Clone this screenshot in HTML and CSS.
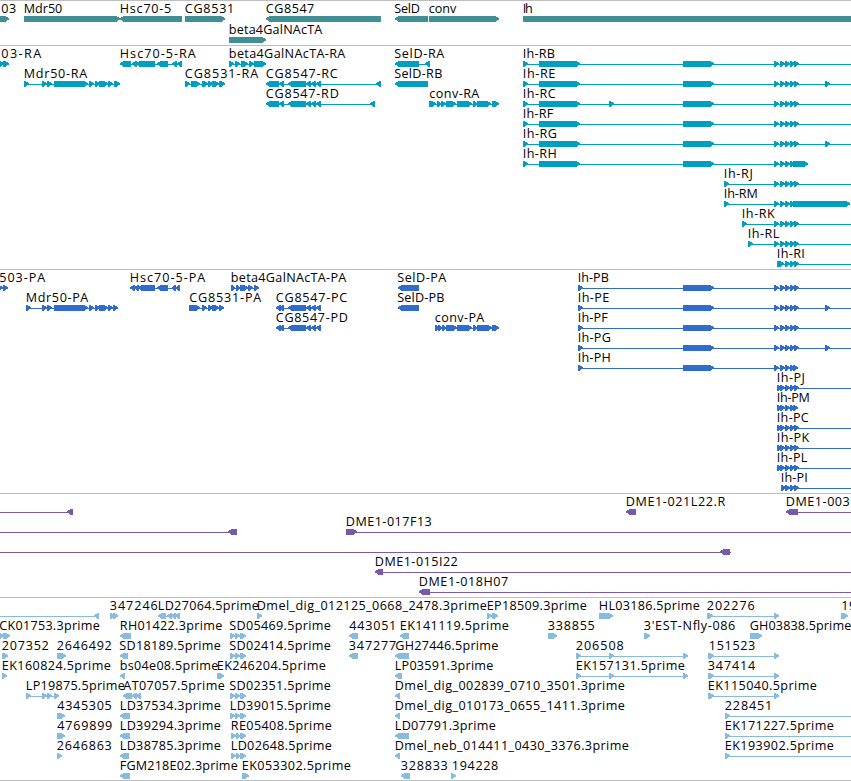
FILE: index.html
```
<!DOCTYPE html>
<html lang="en">
<head>
  <meta charset="UTF-8">
  <meta name="viewport" content="width=device-width, initial-scale=1.0">
  <title>Genome Annotation Viewer</title>
  <link rel="stylesheet" href="styles.css">
</head>
<body>
  <main class="viewer">
    <section class="track"><svg id="genes" class="lanes genes"></svg></section>
    <section class="track"><svg id="transcripts" class="lanes transcripts"></svg></section>
    <section class="track"><svg id="proteins" class="lanes proteins"></svg></section>
    <section class="track"><svg id="clones" class="lanes clones"></svg></section>
    <section class="track"><svg id="ests" class="lanes ests"></svg></section>
  </main>
  <script src="tracks.js"></script>
</body>
</html>
```
FILE: styles.css
```
body {
  margin: 0;
  background: #fff;
  overflow: hidden;
}
.viewer {
  display: flex;
  flex-direction: column;
  border-bottom: 1px solid #bebebe;
}
.track {
  border-top: 1px solid #bebebe;
}
.lanes {
  display: block;
  width: 100%;
}
.genes {
  height: 44px;
  color: #3f8f94;
}
.transcripts {
  height: 223px;
  color: #009fc0;
}
.proteins {
  height: 223px;
  color: #306ccc;
}
.clones {
  height: 103px;
  color: #785aac;
}
.ests {
  height: 182px;
  color: #88bbdd;
}
.label {
  font-family: "Open Sans", "Noto Sans", sans-serif;
  font-size: 12.6px;
  fill: #000;
}
.span, .box {
  fill: currentColor;
  shape-rendering: crispEdges;
}
```
FILE: tracks.js
```
const SVG = 'http://www.w3.org/2000/svg';
const EDGE = 860;

// Exons shared by several features
const ihTail = [[774, 779], [780, 785], [785, 790], [790, 795], [794, 799]];
const ihShort = [[785, 790], [790, 795], [794, 799]];
const ihBig = [[523, 528], [539, 580], [683, 714]];
const ihProt = [[578, 583], [683, 714]];
const ihStart = [[777, 781], [780, 785]];
const ihEnd = [[785, 790], [790, 795], [793, 798]];
const mdr = [[42, 47], [47, 52], [54, 88], [89, 94], [95, 100], [99, 108], [108, 113]];
const cgMid = [[288, 306], [306, 311], [311, 316], [316, 321]];
const sd = [[230, 235], [235, 240], [240, 246]];
const re = [[231, 236], [236, 240], [240, 246]];
const est3 = [[576, 581], [609, 614], [683, 688]];
const est2 = [[708, 714], [774, 779]];

// Each lane is a list of: name, [label start, label end], strand, boxes, [line start, line end]
const tracks = {
  genes: {
    pitch: 21,
    lanes: [
      [
        ['03', [2, 16], '>', [[-10, 9]]],
        ['Mdr50', [24.5, 62], '>', [[24, 120]]],
        ['Hsc70-5', [120.5, 171], '<', [[120, 182]]],
        ['CG8531', [185.5, 234], '>', [[185, 225]]],
        ['CG8547', [266.5, 314], '<', [[266, 381]]],
        ['SelD', [395, 419.5], '<', [[395, 428]]],
        ['conv', [429.5, 456], '>', [[429, 499]]],
        ['Ih', [523.5, 532.5], '>', [[523, EDGE]]]
      ],
      [
        ['beta4GalNAcTA', [229.5, 322], '>', [[229, 266]]]
      ]
    ]
  },
  transcripts: {
    pitch: 20,
    lanes: [
      [
        ['03-RA', [2, 41], '>', [[-2, 4], [3, 9]]],
        ['Hsc70-5-RA', [120.5, 195.5], '<', [[120, 131], [132, 137], [136, 155], [157, 168], [172, 177], [177, 182]]],
        ['beta4GalNAcTA-RA', [229.5, 345], '>', [[229, 234], [235, 240], [241, 248], [249, 254], [254, 266]]],
        ['SelD-RA', [395, 444], '<', [[395, 419], [425, 430]]],
        ['Ih-RB', [523.5, 554.5], '>', [...ihBig, ...ihTail], [523, EDGE]]
      ],
      [
        ['Mdr50-RA', [24.5, 87], '>', [[24, 29], ...mdr, [114, 120]]],
        ['CG8531-RA', [185.5, 258], '>', [[185, 190], [191, 200], [202, 208], [208, 213], [212, 219], [219, 225]]],
        ['CG8547-RC', [266.5, 337.5], '<', [[266, 279], [279, 284], ...cgMid, [376, 381]]],
        ['SelD-RB', [395, 442], '<', [[395, 428]]],
        ['Ih-RE', [523.5, 555], '>', [...ihBig, ...ihTail, [825, 830]], [523, EDGE]]
      ],
      [
        ['CG8547-RD', [266.5, 338.5], '<', [[266, 279], [279, 284], ...cgMid, [370, 375]]],
        ['conv-RA', [430, 479], '>', [[429, 436], [437, 441], [441, 446], [446, 456], [457, 472], [473, 477], [477, 491], [492, 499]]],
        ['Ih-RC', [523.5, 555.5], '>', [...ihBig, [609, 614], ...ihTail], [523, EDGE]]
      ],
      [['Ih-RF', [523.5, 553], '>', [...ihBig, ...ihTail], [523, EDGE]]],
      [['Ih-RG', [523.5, 556.5], '>', [...ihBig, ...ihTail, [825, 830]], [523, EDGE]]],
      [['Ih-RH', [523.5, 556.5], '>', [...ihBig, ...ihTail, [793, 808]]]],
      [['Ih-RJ', [724.5, 752.5], '>', [[724, 729], ...ihTail], [724, EDGE]]],
      [['Ih-RM', [724.5, 757.5], '>', [[724, 729], ...ihTail, [793, 850]]]],
      [['Ih-RK', [742.5, 774.5], '>', [[742, 747], ...ihTail], [742, EDGE]]],
      [['Ih-RL', [748.5, 779], '>', [[748, 753], ...ihTail], [748, EDGE]]],
      [['Ih-RI', [777.5, 804.5], '>', [[777, 784], ...ihShort], [777, EDGE]]]
    ]
  },
  proteins: {
    pitch: 20,
    lanes: [
      [
        ['503-PA', [0, 45], '>', [[-2, 3], [3, 8]]],
        ['Hsc70-5-PA', [130.5, 205], '<', [[130, 135], [134, 139], [138, 155], [157, 168], [172, 176], [176, 180]]],
        ['beta4GalNAcTA-PA', [231.5, 346], '>', [[231, 235], [236, 240], [240, 248], [248, 253], [254, 259]]],
        ['SelD-PA', [398, 446], '<', [[398, 419]]],
        ['Ih-PB', [578.5, 608.5], '>', [...ihProt, ...ihTail], [578, EDGE]]
      ],
      [
        ['Mdr50-PA', [26.5, 88], '>', [[26, 31], ...mdr, [113, 118]]],
        ['CG8531-PA', [190, 261], '>', [[189, 200], [202, 207], [208, 213], [212, 219], [219, 224]]],
        ['CG8547-PC', [276.5, 347], '<', [[276, 281], [280, 284], ...cgMid]],
        ['SelD-PB', [398, 444], '<', [[398, 419]]],
        ['Ih-PE', [578.5, 609], '>', [...ihProt, ...ihTail, [825, 830]], [578, EDGE]]
      ],
      [
        ['CG8547-PD', [276.5, 347.5], '<', [[276, 281], [280, 284], ...cgMid]],
        ['conv-PA', [435.5, 484], '>', [[435, 439], [438, 442], [442, 446], [446, 457], [457, 472], [473, 477], [477, 492], [492, 499]]],
        ['Ih-PF', [578.5, 607.5], '>', [...ihProt, ...ihTail], [578, EDGE]]
      ],
      [['Ih-PG', [578.5, 610.5], '>', [...ihProt, ...ihTail, [825, 830]], [578, EDGE]]],
      [['Ih-PH', [578.5, 610.5], '>', [...ihProt, [774, 779], [780, 785], ...ihEnd]]],
      [['Ih-PJ', [777.5, 804.5], '>', [...ihStart, ...ihShort], [777, EDGE]]],
      [['Ih-PM', [777.5, 809.5], '>', [...ihStart, ...ihEnd]]],
      [['Ih-PC', [777.5, 808.5], '>', [...ihStart, ...ihShort], [777, EDGE]]],
      [['Ih-PK', [777.5, 809], '>', [...ihStart, ...ihShort], [777, EDGE]]],
      [['Ih-PL', [777.5, 807], '>', [...ihStart, ...ihShort], [777, EDGE]]],
      [['Ih-PI', [781.5, 807.5], '>', [[781, 786], ...ihShort], [781, EDGE]]]
    ]
  },
  clones: {
    pitch: 20,
    lanes: [
      [
        [null, null, '<', [[67, 73]], [0, 73]],
        ['DME1-021L22.R', [626.5, 725], '<', [[626, 636]]],
        ['DME1-003', [786.5, 849.5], '<', [[786, 798]], [786, EDGE]]
      ],
      [
        [null, null, '<', [[228, 237]], [0, 237]],
        ['DME1-017F13', [346.5, 431.5], '>', [[346, 357]], [346, EDGE]]
      ],
      [[null, null, '<', [[720, 730]], [0, 731]]],
      [['DME1-015I22', [375.5, 457.5], '<', [[375, 383]], [375, EDGE]]],
      [['DME1-018H07', [419.5, 508], '<', [[419, 430]], [419, EDGE]]]
    ]
  },
  ests: {
    pitch: 20,
    lanes: [
      [
        [null, null, '<', [[94, 99]], [0, 99]],
        ['347246', [110.5, 157.5], '>', [[110, 114], [113, 118]]],
        ['LD27064.5prime', [158.5, 258.5], '<', [[158, 166], [167, 172], [171, 176], [175, 180]]],
        ['Dmel_dig_012125_0668_2478.3prime', [257.5, 486.5], '>', [[257, 262]]],
        ['EP18509.3prime', [487.5, 586.5], '>', [[487, 492], [492, 498]]],
        ['HL03186.5prime', [599.5, 699.5], '>', [[599, 613]]],
        ['202276', [707.5, 754.5], '>', [[707, 713], [774, 779]]],
        ['19', [842, 856], '>', [[841, 848]]]
      ],
      [
        ['CK01753.3prime', [0, 99.5], '>', [[-1, 4], [3, 10]]],
        ['RH01422.3prime', [120.5, 222], '<', [[120, 131]]],
        ['SD05469.5prime', [230, 330.5], '>', sd],
        ['443051', [350, 396], '<', [[349, 358]]],
        ['EK141119.5prime', [400.5, 508.5], '<', [[400, 409]]],
        ['338855', [548.5, 594.5], '>', [[548, 557]]],
        ["3'EST-Nfly-086", [644.5, 735], '>', [[644, 650]]],
        ['GH03838.5prime', [750.5, 851], '>', [[750, 762]]]
      ],
      [
        ['207352', [2.5, 48.5], '>', [[2, 8]]],
        ['2646492', [57.5, 111.5], '>', [[57, 66]]],
        ['SD18189.5prime', [120, 220.5], '<', [[120, 128]]],
        ['SD02414.5prime', [230, 330.5], '>', sd],
        ['347277', [349.5, 396], '<', [[349, 358]]],
        ['GH27446.5prime', [396, 498], '<', [[395, 409]]],
        ['206508', [576.5, 623.5], '>', est3],
        ['151523', [709.5, 755], '>', est2]
      ],
      [
        ['EK160824.5prime', [2.5, 110.5], '>', [[2, 7]]],
        ['bs04e08.5prime', [120.5, 218], '<', [[120, 125]]],
        ['EK246204.5prime', [217.5, 325.5], '>', [[217, 224]]],
        ['LP03591.3prime', [395.5, 493], '<', [[395, 402]]],
        ['EK157131.5prime', [576.5, 684.5], '>', est3],
        ['347414', [708.5, 755], '>', est2]
      ],
      [
        ['LP19875.5prime', [26.5, 124.5], '>', [[26, 31], [42, 47], [47, 52], [54, 59]]],
        ['AT07057.5prime', [124, 224.5], '<', [[123, 132], [132, 137], [136, 141]]],
        ['SD02351.5prime', [230, 330.5], '>', sd],
        ['Dmel_dig_002839_0710_3501.3prime', [395.5, 624.5], '<', [[395, 400]]],
        ['EK115040.5prime', [708.5, 816.5], '>', est2]
      ],
      [
        ['4345305', [58, 111.5], '>', [[57, 65]]],
        ['LD37534.3prime', [120.5, 220.5], '<', [[120, 130]]],
        ['LD39015.5prime', [230.5, 330.5], '>', sd],
        ['Dmel_dig_010173_0655_1411.3prime', [395.5, 624.5], '<', [[395, 400]]],
        ['228451', [725.5, 772], '>', [[725, 730]], [725, EDGE]]
      ],
      [
        ['4769899', [58, 112], '>', [[57, 65]]],
        ['LD39294.3prime', [120.5, 220.5], '<', [[120, 130]]],
        ['RE05408.5prime', [231.5, 331.5], '>', re],
        ['LD07791.3prime', [395.5, 495.5], '<', [[395, 409]]],
        ['EK171227.5prime', [725.5, 833.5], '>', [[725, 730]], [725, EDGE]]
      ],
      [
        ['2646863', [57.5, 111.5], '>', [[57, 62]]],
        ['LD38785.3prime', [120.5, 220.5], '<', [[120, 129]]],
        ['LD02648.5prime', [231.5, 331.5], '>', re],
        ['Dmel_neb_014411_0430_3376.3prime', [395.5, 628.5], '<', [[395, 400]]],
        ['EK193902.5prime', [725.5, 833.5], '>', [[725, 730]], [725, EDGE]]
      ],
      [
        ['FGM218E02.3prime', [120.5, 237.5], '<', [[120, 130]]],
        ['EK053302.5prime', [242.5, 350.5], '>', [[242, 249]]],
        ['328833', [401.5, 447.5], '<', [[401, 410]]],
        ['194228', [452.5, 498], '>', [[451, 456]]]
      ]
    ]
  }
};

function add(svg, tag, attrs) {
  const el = document.createElementNS(SVG, tag);
  for (const key in attrs) el.setAttribute(key, attrs[key]);
  svg.appendChild(el);
  return el;
}

// Box with a pointed end on the side of its strand
function boxPoints(x0, x1, strand, y) {
  const head = Math.min(5, x1 - x0);
  if (strand === '>') {
    const neck = x1 - head;
    return `${x0},${y} ${neck + 1},${y} ${x1},${y + 2.4} ${x1},${y + 3.6} ${neck + 1},${y + 6} ${x0},${y + 6}`;
  }
  const neck = x0 + head;
  return `${x1},${y} ${neck - 1},${y} ${x0},${y + 2.4} ${x0},${y + 3.6} ${neck - 1},${y + 6} ${x1},${y + 6}`;
}

function drawFeature(svg, feature, top) {
  const [name, labelX, strand, boxes, line] = feature;
  const y = top + 15;
  const [from, to] = line || [boxes[0][0], boxes[boxes.length - 1][1]];
  add(svg, 'rect', { class: 'span', x: from, y: y + 3, width: to - from, height: 1 });
  boxes.forEach(([x0, x1]) => {
    add(svg, 'polygon', { class: 'box', points: boxPoints(x0, x1, strand, y) });
  });
  if (name) {
    const text = add(svg, 'text', {
      class: 'label',
      x: labelX[0] - 0.7,
      y: top + 12,
      textLength: labelX[1] - labelX[0] + 1
    });
    text.textContent = name;
  }
}

for (const id in tracks) {
  const svg = document.getElementById(id);
  const { pitch, lanes } = tracks[id];
  lanes.forEach((lane, i) => lane.forEach(feature => drawFeature(svg, feature, i * pitch)));
}
```
